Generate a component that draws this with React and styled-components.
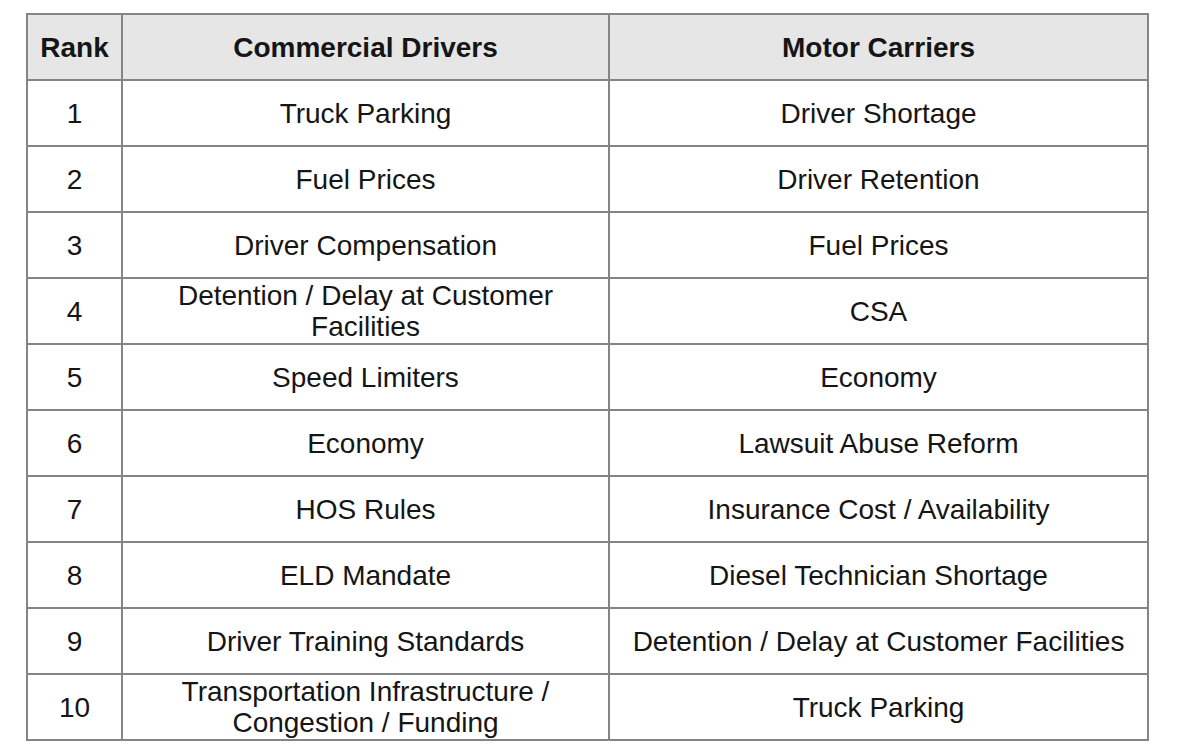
import React from "react";
import styled, { createGlobalStyle } from "styled-components";

const Global = createGlobalStyle`
  html, body { margin: 0; padding: 0; background: #ffffff; }
  body { font-family: "Liberation Sans", Arial, sans-serif; }
`;

const Page = styled.div`
  padding: 13px 0 0 26px;
  display: flex;
  align-items: flex-start;
`;

const Grid = styled.div`
  display: grid;
  grid-template-columns: 93px 485px 537px;
  grid-auto-rows: 64px;
  gap: 2px;
  padding: 2px;
  background: #858585;
`;

const Cell = styled.div`
  display: flex;
  align-items: center;
  justify-content: center;
  text-align: center;
  padding: 0 6px;
  background: ${(p) => (p.$head ? "#e6e6e6" : "#ffffff")};
  color: #151515;
  font-size: 28px;
  line-height: 31px;
  font-weight: ${(p) => (p.$head ? 700 : 400)};
`;

const rows = [
  ["1", "Truck Parking", "Driver Shortage"],
  ["2", "Fuel Prices", "Driver Retention"],
  ["3", "Driver Compensation", "Fuel Prices"],
  ["4", "Detention / Delay at Customer Facilities", "CSA"],
  ["5", "Speed Limiters", "Economy"],
  ["6", "Economy", "Lawsuit Abuse Reform"],
  ["7", "HOS Rules", "Insurance Cost / Availability"],
  ["8", "ELD Mandate", "Diesel Technician Shortage"],
  ["9", "Driver Training Standards", "Detention / Delay at Customer Facilities"],
  ["10", "Transportation Infrastructure / Congestion / Funding", "Truck Parking"],
];

export default function App() {
  return (
    <>
      <Global />
      <Page>
        <Grid>
          <Cell $head>Rank</Cell>
          <Cell $head>Commercial Drivers</Cell>
          <Cell $head>Motor Carriers</Cell>
          {rows.map((r) =>
            r.map((c, i) => <Cell key={r[0] + "-" + i}>{c}</Cell>)
          )}
        </Grid>
      </Page>
    </>
  );
}
